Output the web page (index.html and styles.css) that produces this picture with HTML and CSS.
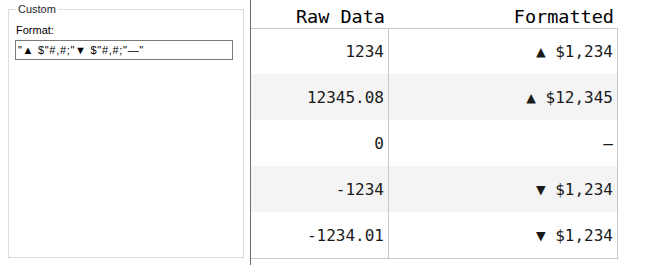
FILE: index.html
```html
<!DOCTYPE html>
<html>
<head>
<meta charset="utf-8">
<link rel="stylesheet" href="styles.css">
</head>
<body>
<div class="app">
  <div class="side">
    <div class="group">
      <span class="group-title">Custom</span>
      <div class="label">Format:</div>
      <input class="format-input" type="text" value="&quot;▲ $&quot;#,#;&quot;▼ $&quot;#,#;&quot;—&quot;">
    </div>
  </div>
  <div class="main">
    <div class="grid">
      <div class="head">
        <div class="hcell c1">Raw Data</div>
        <div class="hcell c2">Formatted</div>
      </div>
      <div class="row first">
        <div class="cell c1">1234</div>
        <div class="cell c2">▲ $1,234</div>
      </div>
      <div class="row alt">
        <div class="cell c1">12345.08</div>
        <div class="cell c2">▲ $12,345</div>
      </div>
      <div class="row">
        <div class="cell c1">0</div>
        <div class="cell c2">—</div>
      </div>
      <div class="row alt">
        <div class="cell c1">-1234</div>
        <div class="cell c2">▼ $1,234</div>
      </div>
      <div class="row last">
        <div class="cell c1">-1234.01</div>
        <div class="cell c2">▼ $1,234</div>
      </div>
    </div>
  </div>
</div>
</body>
</html>
```

FILE: styles.css
```css
* { box-sizing: border-box; }
html, body { margin: 0; padding: 0; background: #fff; }
body { font-family: "Liberation Sans", Arial, sans-serif; }

.app {
  display: flex;
  width: 648px;
  height: 265px;
}

.side {
  width: 251px;
  height: 265px;
  flex: none;
  padding: 9px 6px 7px 8px;
  border-right: 1px solid #6e6e6e;
}

.group {
  position: relative;
  height: 249px;
  border: 1px solid #dcdcdc;
  padding: 14px 7px 0 6px;
}

.group-title {
  position: absolute;
  top: -7px;
  left: 7px;
  padding: 0 2px;
  background: #fff;
  font-size: 11px;
  line-height: 13px;
  color: #1e1e1e;
}

.label {
  font-size: 11px;
  line-height: 13px;
  color: #000;
  padding-left: 1px;
}

.format-input {
  display: block;
  margin: 3px 0 0 0;
  width: 218px;
  height: 20px;
  border: 1px solid #7a7a7a;
  border-radius: 0;
  padding: 0 2px;
  font-family: "Liberation Sans", Arial, "DejaVu Sans", sans-serif;
  font-size: 11px;
  line-height: 13px;
  letter-spacing: 0.7px;
  color: #000;
  background: #fff;
  outline: none;
}

.main {
  flex: 1;
}

.grid {
  width: 367px;
  font-family: "DejaVu Sans Mono", monospace;
}

.head {
  display: flex;
  height: 29px;
  border-bottom: 1px solid #c8c8c8;
}

.hcell {
  font-size: 18.5px;
  line-height: 22px;
  padding-top: 6px;
  text-align: right;
  color: #000;
}
.hcell.c1 { width: 138px; padding-right: 4px; }
.hcell.c2 { width: 229px; padding-right: 4px; }

.row {
  display: flex;
  height: 46px;
}
.row.first { height: 45px; }
.row.alt { background: #f4f4f4; }
.row.last { height: 47px; border-bottom: 1px solid #c8c8c8; }

.cell {
  display: flex;
  align-items: center;
  justify-content: flex-end;
  font-size: 16px;
  color: #1a1a1a;
  padding-right: 4px;
  border-right: 1px solid #c8c8c8;
}
.cell.c1 { width: 138px; }
.cell.c2 { width: 229px; }
```
